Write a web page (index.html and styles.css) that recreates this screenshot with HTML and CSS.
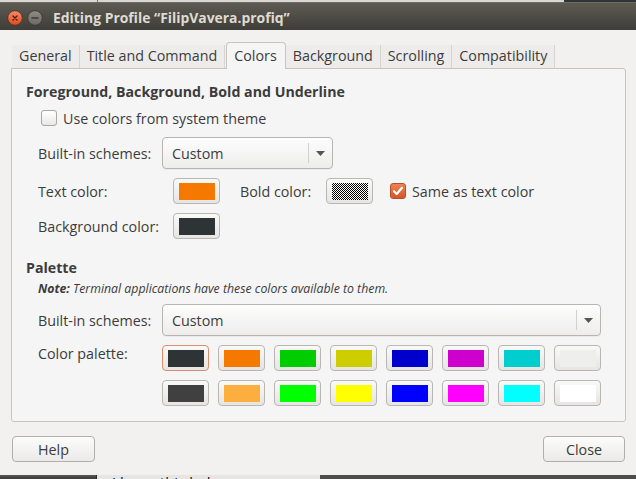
FILE: index.html
```html
<!DOCTYPE html>
<html lang="en">
<head>
<meta charset="utf-8">
<title>Editing Profile</title>
<link rel="stylesheet" href="styles.css">
</head>
<body>
<div class="top-strip"></div>
<div class="window">
  <header class="titlebar">
    <svg class="wbtn" width="16" height="16" viewBox="0 0 16 16">
      <defs><linearGradient id="cg" x1="0" y1="0" x2="0" y2="1"><stop offset="0" stop-color="#f68d66"/><stop offset="1" stop-color="#dc4a1f"/></linearGradient></defs>
      <circle cx="8" cy="8" r="7.3" fill="url(#cg)" stroke="#55291a" stroke-width="0.8"/>
      <path d="M6 6l4 4M10 6l-4 4" stroke="#4a1d0f" stroke-width="1.3" stroke-linecap="round"/>
    </svg>
    <svg class="wbtn" width="16" height="16" viewBox="0 0 16 16">
      <defs><linearGradient id="mg" x1="0" y1="0" x2="0" y2="1"><stop offset="0" stop-color="#8f8c86"/><stop offset="1" stop-color="#6a6864"/></linearGradient></defs>
      <circle cx="8" cy="8" r="7.3" fill="url(#mg)" stroke="#35342f" stroke-width="0.8"/>
      <path d="M5 8h6" stroke="#3a3935" stroke-width="1.5" stroke-linecap="round"/>
    </svg>
    <span class="title">Editing Profile “FilipVavera.profiq”</span>
  </header>

  <main class="content">
    <nav class="tabs">
      <span class="tab">General</span>
      <span class="tab">Title and Command</span>
      <span class="tab active">Colors</span>
      <span class="tab">Background</span>
      <span class="tab">Scrolling</span>
      <span class="tab">Compatibility</span>
    </nav>

    <section class="panel">
      <h2 class="group-title">Foreground, Background, Bold and Underline</h2>
      <div class="group-body">
        <label class="check-row">
          <span class="check"></span>
          <span>Use colors from system theme</span>
        </label>

        <div class="form-row">
          <span class="label">Built-in schemes:</span>
          <div class="combo combo-short">
            <span class="combo-value">Custom</span>
            <span class="combo-sep"></span>
            <span class="combo-arrow"><svg width="9" height="5" viewBox="0 0 9 5"><polygon points="0,0 9,0 4.5,5" fill="#555"/></svg></span>
          </div>
        </div>

        <div class="color-grid">
          <span class="label">Text color:</span>
          <span class="color-btn"><span class="swatch sw-orange"></span></span>
          <span class="label">Bold color:</span>
          <span class="color-btn"><span class="swatch sw-checker"></span></span>
          <label class="same-row">
            <span class="check checked"><svg width="14" height="14" viewBox="0 0 14 14"><path d="M3 7.2l2.7 2.8L11 3.8" fill="none" stroke="#fff" stroke-width="2.1" stroke-linecap="round" stroke-linejoin="round"/></svg></span>
            <span>Same as text color</span>
          </label>

          <span class="label">Background color:</span>
          <span class="color-btn"><span class="swatch sw-dark"></span></span>
        </div>
      </div>

      <h2 class="group-title palette-title">Palette</h2>
      <div class="group-body">
        <p class="note"><b>Note:</b> Terminal applications have these colors available to them.</p>

        <div class="form-row form-row-2">
          <span class="label">Built-in schemes:</span>
          <div class="combo combo-long">
            <span class="combo-value">Custom</span>
            <span class="combo-sep"></span>
            <span class="combo-arrow"><svg width="9" height="5" viewBox="0 0 9 5"><polygon points="0,0 9,0 4.5,5" fill="#555"/></svg></span>
          </div>
        </div>

        <div class="palette">
          <span class="label palette-label">Color palette:</span>
          <span class="color-btn selected"><span class="swatch" style="background:#2e3436"></span></span>
          <span class="color-btn"><span class="swatch" style="background:#f57900"></span></span>
          <span class="color-btn"><span class="swatch" style="background:#00cd00"></span></span>
          <span class="color-btn"><span class="swatch" style="background:#cdcd00"></span></span>
          <span class="color-btn"><span class="swatch" style="background:#0000cd"></span></span>
          <span class="color-btn"><span class="swatch" style="background:#cd00cd"></span></span>
          <span class="color-btn"><span class="swatch" style="background:#00cdcd"></span></span>
          <span class="color-btn"><span class="swatch" style="background:#eeeeec"></span></span>
          <span class="color-btn"><span class="swatch" style="background:#404040"></span></span>
          <span class="color-btn"><span class="swatch" style="background:#fcaf3e"></span></span>
          <span class="color-btn"><span class="swatch" style="background:#00ff00"></span></span>
          <span class="color-btn"><span class="swatch" style="background:#ffff00"></span></span>
          <span class="color-btn"><span class="swatch" style="background:#0000ff"></span></span>
          <span class="color-btn"><span class="swatch" style="background:#ff00ff"></span></span>
          <span class="color-btn"><span class="swatch" style="background:#00ffff"></span></span>
          <span class="color-btn"><span class="swatch" style="background:#ffffff"></span></span>
        </div>
      </div>
    </section>

    <footer class="actions">
      <button class="btn">Help</button>
      <button class="btn btn-close">Close</button>
    </footer>
  </main>
</div>
<div class="backdrop">
  <div class="shade-left"></div>
  <div class="page"><span>I hope this helps.</span></div>
  <div class="shade-right"></div>
</div>
</body>
</html>
```

FILE: styles.css
```css
* { box-sizing: border-box; margin: 0; padding: 0; }

html, body {
  width: 636px;
  height: 479px;
  overflow: hidden;
}

body {
  font-family: "Open Sans", "Noto Sans", "DejaVu Sans", sans-serif;
  font-size: 14.3px;
  color: #3c3c3c;
  background: #4b4b4b;
}

.top-strip {
  height: 2px;
  background: linear-gradient(to right, #d8d7d4 0 97px, #7b7b7a 97px 98px, #d8d7d4 98px 564px, #2f3436 564px);
}

.window {
  height: 473px;
  display: flex;
  flex-direction: column;
}

.titlebar {
  height: 28px;
  flex: none;
  display: flex;
  align-items: center;
  gap: 4px;
  padding: 2px 0 0 7px;
  background: linear-gradient(#5d5a52, #3e3d38);
  border-top: 1px solid #6d6a62;
}

.wbtn { flex: none; width: 16px; height: 16px; }

.title {
  margin-left: 6px;
  font-weight: bold;
  font-size: 13.9px;
  color: #dfdbd2;
}

.content {
  flex: 1;
  display: flex;
  flex-direction: column;
  background: #f2f1f0;
  padding: 12px 10px 13px 11px;
}

.tabs {
  height: 26px;
  display: flex;
  align-items: flex-end;
  margin-left: 1px;
}

.tab {
  height: 23px;
  line-height: 22px;
  padding: 0 7px;
  background: #edecea;
  border-right: 1px solid #d7d5d2;
  white-space: nowrap;
}

.tab.active {
  height: 27px;
  line-height: 25px;
  margin-bottom: -1px;
  margin-left: 1px;
  padding: 0 8px 0 7px;
  background: #f5f5f5;
  border: 1px solid #c7c5c2;
  border-bottom: none;
  border-radius: 4px 4px 0 0;
  position: relative;
  z-index: 1;
}

.panel {
  height: 354px;
  background: #f5f5f5;
  border: 1px solid #c7c5c2;
  border-radius: 0 3px 3px 3px;
  padding: 14px 14px 0 14px;
}

.group-title {
  font-size: 14.2px;
  font-weight: bold;
  line-height: 18px;
  color: #3c3c3c;
}

.group-body { padding-left: 12px; }

.label { white-space: nowrap; }

.check-row {
  display: flex;
  align-items: center;
  gap: 6px;
  height: 18px;
  margin-top: 8px;
}

.check {
  flex: none;
  width: 16px;
  height: 16px;
  margin-left: 3px;
  border: 1px solid #a9a7a4;
  border-radius: 3px;
  background: linear-gradient(#ffffff, #e9e8e6);
  display: flex;
  align-items: center;
  justify-content: center;
}

.check.checked {
  margin-left: 0;
  border-color: #b5512a;
  background: linear-gradient(#ee8257, #d4572a);
}

.form-row {
  display: grid;
  grid-template-columns: 124px auto;
  align-items: center;
  margin-top: 10px;
}

.form-row-2 { margin-top: 7px; }

.combo {
  height: 32px;
  display: flex;
  align-items: center;
  padding-left: 9px;
  border: 1px solid #b7b5b2;
  border-radius: 4px;
  background: linear-gradient(#fdfdfd, #eeedec);
  box-shadow: 0 1px 0 rgba(0, 0, 0, 0.04), inset 0 1px 0 #fff;
}

.combo-short { width: 171px; }
.combo-long { width: 439px; }

.combo-value { flex: 1; }

.combo-sep {
  width: 1px;
  align-self: stretch;
  margin: 5px 0;
  background: #d2d0cd;
}

.combo-arrow {
  width: 23px;
  display: flex;
  justify-content: center;
}

.color-grid {
  display: grid;
  grid-template-columns: 135px 67px 86px 64px auto;
  grid-auto-rows: 26px;
  row-gap: 9px;
  align-items: center;
  margin-top: 9px;
}

.color-btn {
  display: block;
  width: 47px;
  height: 26px;
  padding: 4px 4px 3px 5px;
  border: 1px solid #b9b7b4;
  border-radius: 4px;
  background: linear-gradient(#f9f9f8, #e6e5e3);
}

.color-btn.selected { border-color: #d98e6d; }

.swatch {
  display: block;
  width: 100%;
  height: 100%;
}

.sw-orange { background: #f57900; }
.sw-dark { background: #2e3436; }
.sw-checker {
  background: repeating-conic-gradient(#000 0 25%, #fff 0 50%) 0 0 / 2px 2px;
}

.same-row {
  display: flex;
  align-items: center;
  gap: 6px;
}

.palette-title { margin-top: 20px; }

.note {
  margin-top: 4px;
  font-size: 12.3px;
  line-height: 16px;
  font-style: italic;
}

.palette {
  display: grid;
  grid-template-columns: 115px repeat(8, 47px);
  grid-auto-rows: 26px;
  column-gap: 9px;
  row-gap: 9px;
  margin-top: 9px;
}

.palette-label {
  grid-row: span 2;
  line-height: 18px;
}

.actions {
  display: flex;
  justify-content: space-between;
  margin: 14px 1px 0 1px;
}

.btn {
  width: 83px;
  height: 26px;
  font: inherit;
  color: #3c3c3c;
  border: 1px solid #b1afac;
  border-radius: 4px;
  background: linear-gradient(#fcfcfb, #ebeae8);
  box-shadow: inset 0 1px 0 #fff;
}

.btn-close { width: 82px; }

.backdrop {
  height: 4px;
  display: flex;
}

.shade-left {
  width: 97px;
  background: linear-gradient(#555, #3a3a3a);
  border-right: 1px solid #2a2a2a;
}

.page {
  width: 223px;
  background: #e6e5e3;
  overflow: hidden;
  padding-left: 15px;
  font-size: 15px;
  line-height: 15px;
  color: #111;
}

.page span { display: block; }

.shade-right {
  flex: 1;
  background: #4d4d4b;
}
```
